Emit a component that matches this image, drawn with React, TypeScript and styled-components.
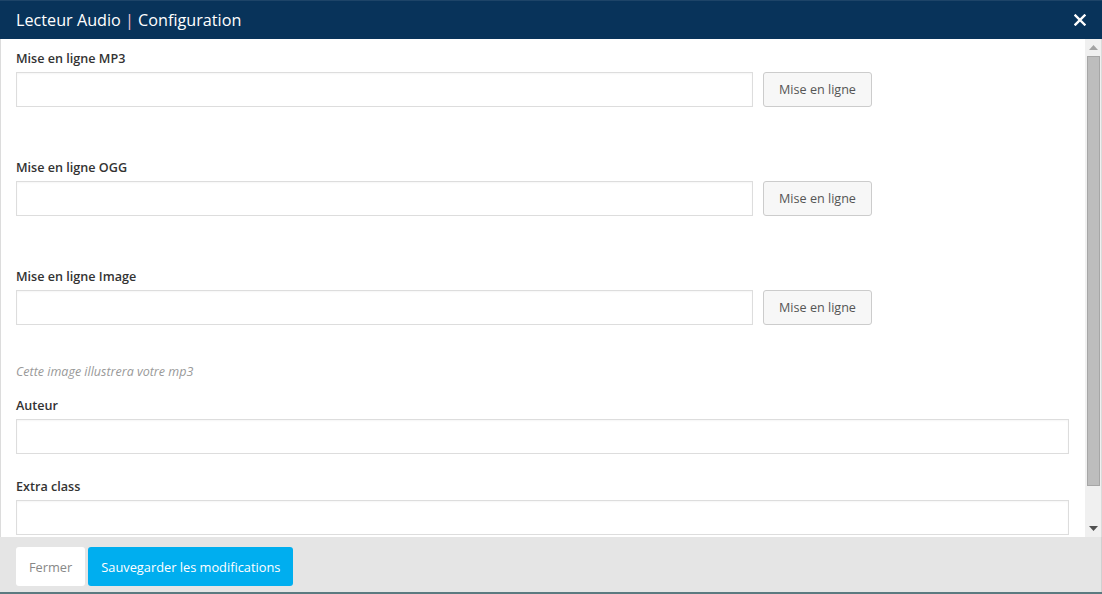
import React from "react";
import styled, { createGlobalStyle } from "styled-components";

const GlobalStyle = createGlobalStyle`
  html, body {
    margin: 0;
    padding: 0;
    background: #ffffff;
  }
  body {
    font-family: "Open Sans", "Liberation Sans", sans-serif;
  }
  * {
    box-sizing: border-box;
  }
`;

const Modal = styled.div`
  width: 1102px;
  height: 594px;
  display: flex;
  flex-direction: column;
  background: #ffffff;
  border-bottom: 2px solid #5b7a80;
`;

const Header = styled.div`
  height: 39px;
  flex-shrink: 0;
  background: #08335a;
  display: flex;
  align-items: center;
  justify-content: space-between;
  padding: 0 14px 0 16px;
  border-top: 1px solid #1d4468;
`;

const Title = styled.h1`
  margin: 0;
  font-size: 16.2px;
  font-weight: 400;
  color: #ffffff;
`;

const Pipe = styled.span`
  color: #f3c6d4;
`;

const CloseButton = styled.button`
  border: none;
  background: transparent;
  padding: 0;
  width: 16px;
  height: 16px;
  display: flex;
  align-items: center;
  justify-content: center;
  cursor: pointer;
`;

const Body = styled.div`
  flex: 1;
  min-height: 0;
  display: flex;
  border-left: 1px solid #dcdcdc;
`;

const Content = styled.div`
  flex: 1;
  min-width: 0;
  overflow: hidden;
  padding: 10px 16px 0 15px;
`;

const ScrollBar = styled.div`
  width: 17px;
  flex-shrink: 0;
  display: flex;
  flex-direction: column;
  background: #f0f0f0;
  border-right: 1px solid #dadada;
`;

const ScrollArrow = styled.div`
  height: 17px;
  flex-shrink: 0;
  display: flex;
  align-items: center;
  justify-content: center;
`;

const ScrollTrack = styled.div`
  flex: 1;
  display: flex;
  flex-direction: column;
  padding: 0 1px 0 2px;
`;

const ScrollThumb = styled.div`
  height: 430px;
  background: #bdbdbd;
  border: 1px solid #a6a6a6;
`;

const Field = styled.div<{ $gap: number }>`
  margin-bottom: ${(p) => p.$gap}px;
`;

const Label = styled.div`
  font-size: 12.6px;
  font-weight: 600;
  color: #333333;
  line-height: 19px;
  margin-bottom: 4px;
`;

const Row = styled.div`
  display: flex;
  gap: 10px;
`;

const Input = styled.input<{ $width?: number }>`
  height: 35px;
  width: ${(p) => (p.$width ? `${p.$width}px` : "100%")};
  flex: ${(p) => (p.$width ? "none" : "1")};
  border: 1px solid #dddddd;
  background: #ffffff;
  box-shadow: inset 0 1px 2px rgba(0, 0, 0, 0.04);
  font-family: inherit;
  font-size: 13px;
  padding: 0 8px;
  outline: none;
`;

const UploadButton = styled.button`
  height: 35px;
  width: 109px;
  border: 1px solid #cccccc;
  border-radius: 3px;
  background: #f7f7f7;
  color: #555555;
  font-family: inherit;
  font-size: 12.6px;
  padding: 0;
  cursor: pointer;
`;

const Help = styled.div`
  font-size: 12.5px;
  font-style: italic;
  color: #999999;
  line-height: 18px;
  margin-bottom: 15px;
`;

const Footer = styled.div`
  height: 55px;
  flex-shrink: 0;
  background: #e5e5e5;
  display: flex;
  align-items: flex-start;
  gap: 3px;
  padding: 10px 16px 0 16px;
  border-right: 1px solid #d0d0d0;
`;

const FooterButton = styled.button<{ $primary?: boolean }>`
  height: 39px;
  border: none;
  border-radius: 3px;
  padding: 0 13px;
  font-family: inherit;
  font-size: 12.8px;
  background: ${(p) => (p.$primary ? "#00aeef" : "#ffffff")};
  color: ${(p) => (p.$primary ? "#ffffff" : "#888888")};
  cursor: pointer;
`;

const uploads = ["Mise en ligne MP3", "Mise en ligne OGG", "Mise en ligne Image"];

export default function App() {
  return (
    <>
      <GlobalStyle />
      <Modal>
        <Header>
          <Title>
            Lecteur Audio <Pipe>|</Pipe> Configuration
          </Title>
          <CloseButton aria-label="Fermer">
            <svg width="12" height="12" viewBox="0 0 12 12">
              <path d="M1.5 1.5 L10.5 10.5 M10.5 1.5 L1.5 10.5" stroke="#fff" strokeWidth="2.4" strokeLinecap="square" />
            </svg>
          </CloseButton>
        </Header>
        <Body>
          <Content>
            {uploads.map((label, i) => (
              <Field key={label} $gap={i < 2 ? 51 : 38}>
                <Label>{label}</Label>
                <Row>
                  <Input $width={737} />
                  <UploadButton>Mise en ligne</UploadButton>
                </Row>
              </Field>
            ))}
            <Help>Cette image illustrera votre mp3</Help>
            <Field $gap={23}>
              <Label>Auteur</Label>
              <Input />
            </Field>
            <Field $gap={0}>
              <Label>Extra class</Label>
              <Input />
            </Field>
          </Content>
          <ScrollBar>
            <ScrollArrow>
              <svg width="9" height="5" viewBox="0 0 9 5">
                <path d="M0 5 L4.5 0 L9 5 Z" fill="#a3a3a3" />
              </svg>
            </ScrollArrow>
            <ScrollTrack>
              <ScrollThumb />
            </ScrollTrack>
            <ScrollArrow>
              <svg width="9" height="5" viewBox="0 0 9 5">
                <path d="M0 0 L4.5 5 L9 0 Z" fill="#505050" />
              </svg>
            </ScrollArrow>
          </ScrollBar>
        </Body>
        <Footer>
          <FooterButton>Fermer</FooterButton>
          <FooterButton $primary>Sauvegarder les modifications</FooterButton>
        </Footer>
      </Modal>
    </>
  );
}
